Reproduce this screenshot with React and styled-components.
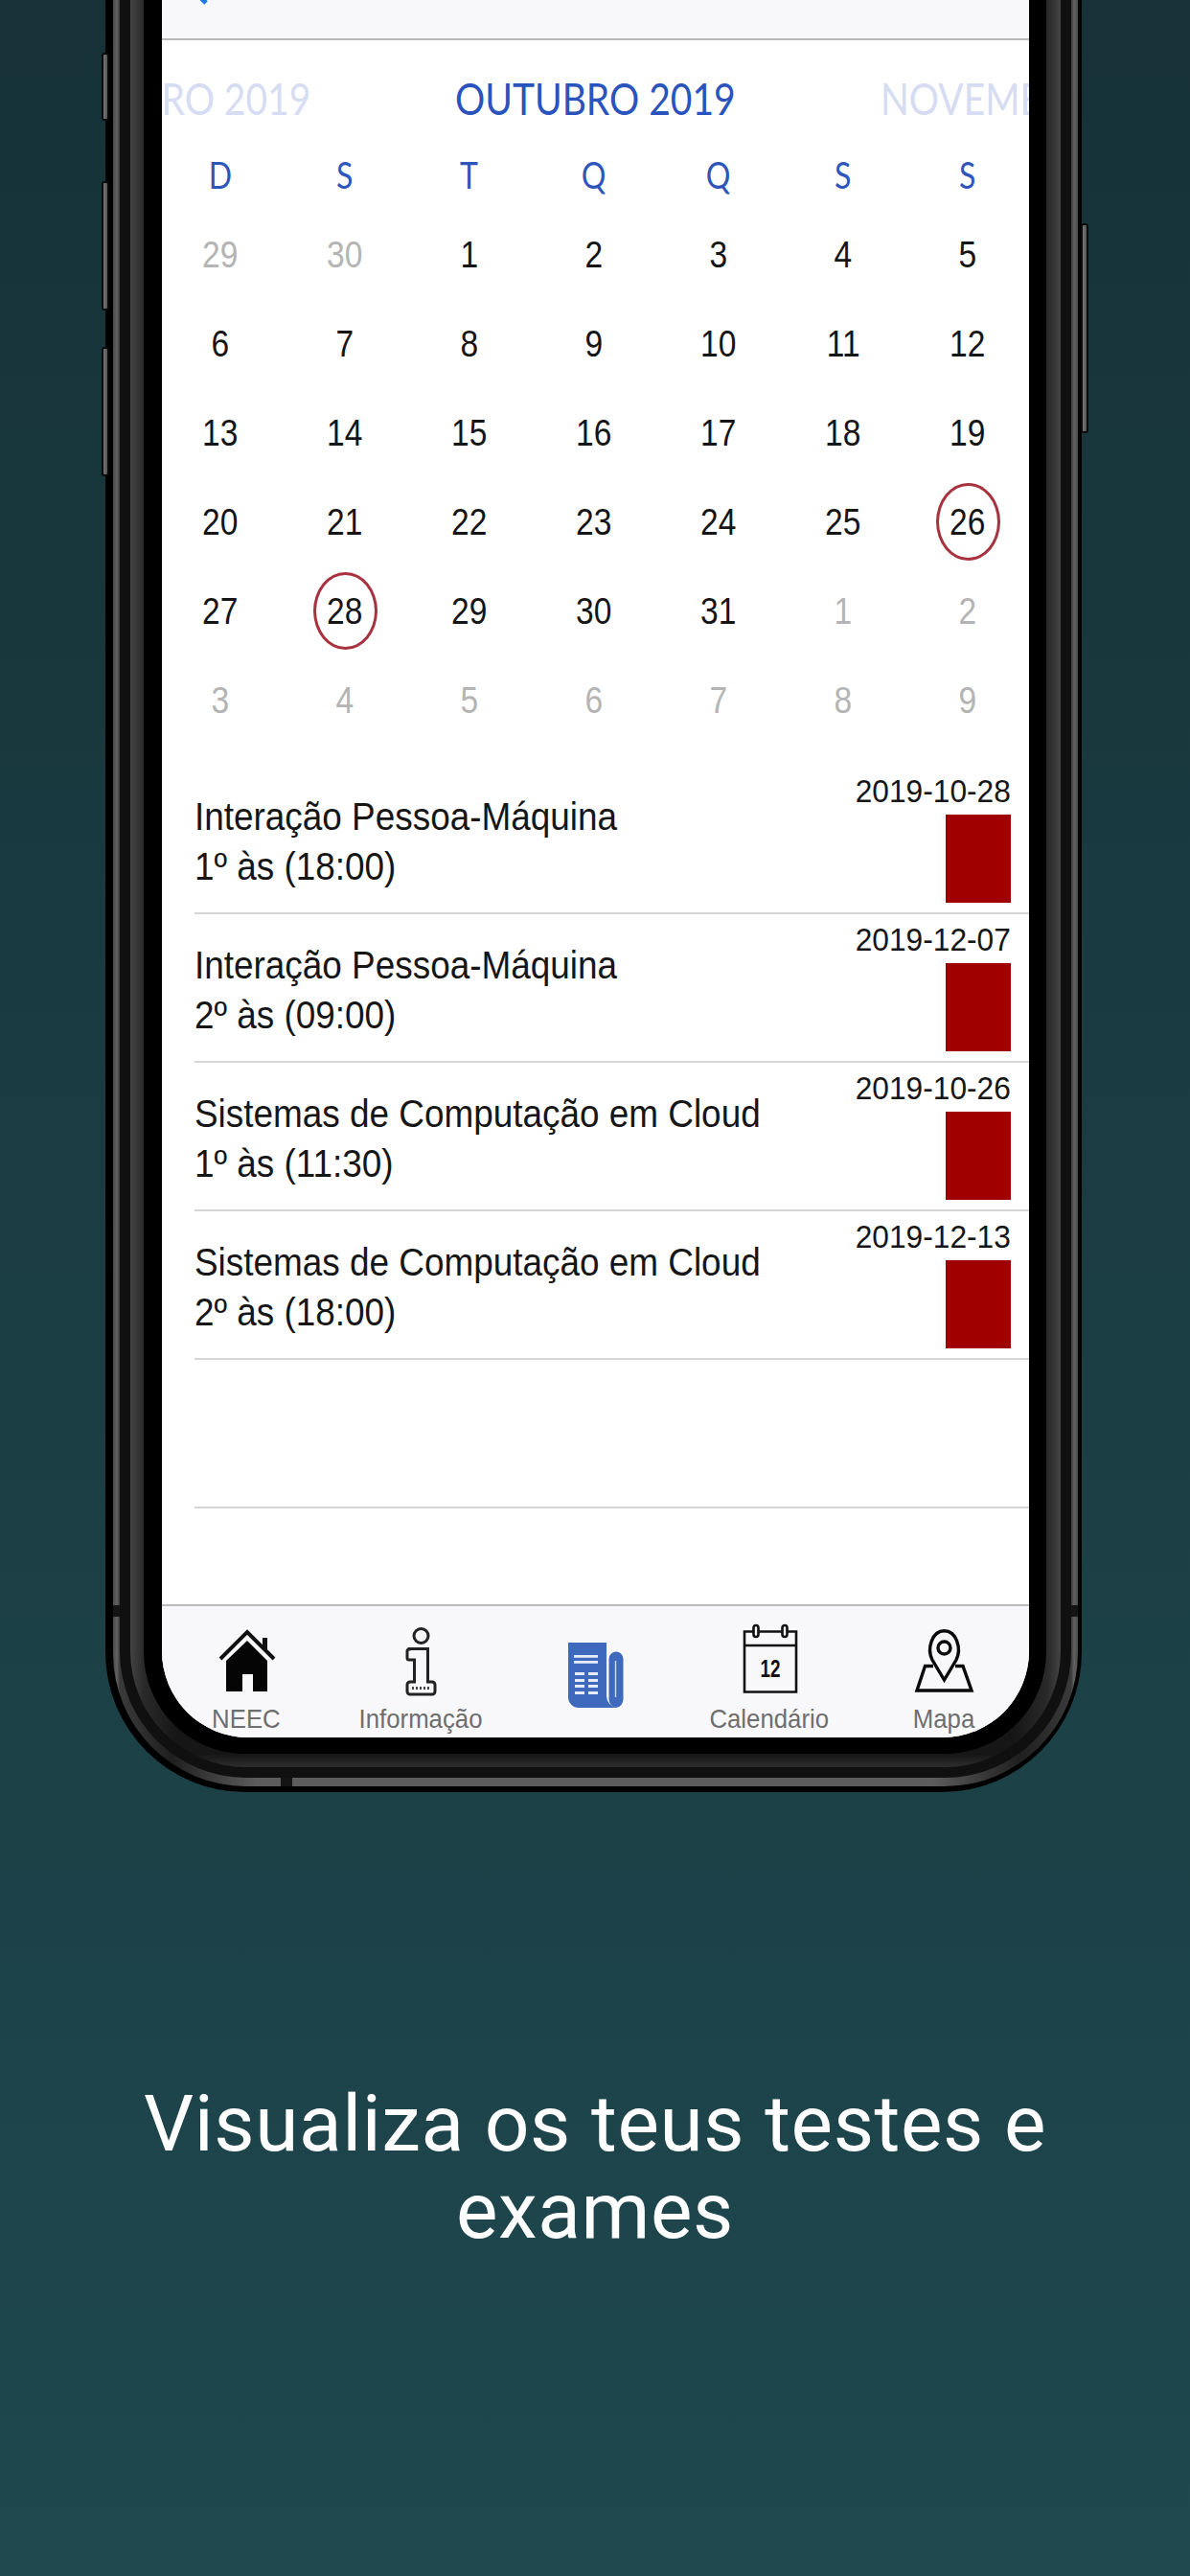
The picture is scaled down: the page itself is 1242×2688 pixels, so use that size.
import React from 'react'
import styled, { createGlobalStyle } from 'styled-components'

const GlobalStyle = createGlobalStyle`
  html, body {
    margin: 0;
    padding: 0;
    background: #1e484e;
  }
`

const WEEKDAYS = ['D', 'S', 'T', 'Q', 'Q', 'S', 'S']

const DAYS = [
  [29, true], [30, true], [1], [2], [3], [4], [5],
  [6], [7], [8], [9], [10], [11], [12],
  [13], [14], [15], [16], [17], [18], [19],
  [20], [21], [22], [23], [24], [25], [26, false, true],
  [27], [28, false, true], [29], [30], [31], [1, true], [2, true],
  [3, true], [4, true], [5, true], [6, true], [7, true], [8, true], [9, true],
]

const EXAMS = [
  { title: 'Interação Pessoa-Máquina', when: '1º às (18:00)', date: '2019-10-28' },
  { title: 'Interação Pessoa-Máquina', when: '2º às (09:00)', date: '2019-12-07' },
  { title: 'Sistemas de Computação em Cloud', when: '1º às (11:30)', date: '2019-10-26' },
  { title: 'Sistemas de Computação em Cloud', when: '2º às (18:00)', date: '2019-12-13' },
]

const HomeIcon = () => (
  <TabSvg viewBox="0 0 80 90">
    <path d="M13 38 L41 10 L69 38" fill="none" stroke="#111" strokeWidth="4" />
    <path d="M57 16 H62 V30 L57 25 Z" fill="#111" />
    <path d="M41 19 L62 40 V72 H47 V54 H36 V72 H19 V40 Z" fill="#050505" />
  </TabSvg>
)

const InfoIcon = () => (
  <TabSvg viewBox="0 0 80 90">
    <g fill="none" stroke="#222" strokeWidth="3">
      <circle cx="40.5" cy="14" r="7.5" />
      <path d="M28 27.5 H47.5 V62 H52 a3 3 0 0 1 3 3 v7 a3 3 0 0 1 -3 3 H29 a3 3 0 0 1 -3 -3 v-7 a3 3 0 0 1 3 -3 H33.5 V39 H28 a2 2 0 0 1 -2 -2 v-7 a2 2 0 0 1 2 -2 z" />
      <path d="M31 68.5 H50" strokeDasharray="2 2" stroke="#444" />
    </g>
  </TabSvg>
)

const NewsIcon = () => (
  <TabSvg viewBox="0 0 80 90">
    <path d="M12 21 H52 V76 a13 13 0 0 0 10 13 H23 a11 11 0 0 1 -11 -11 Z" fill="#3f69bd" />
    <path d="M54.5 38 a7.5 7.5 0 0 1 15 0 V80 a9 9 0 0 1 -7.5 9 a9 9 0 0 1 -7.5 -9 Z" fill="#3f69bd" />
    <path d="M61.5 40 V78" stroke="#c9d5ee" strokeWidth="1.5" />
    <g fill="#e6ecf8">
      <rect x="18" y="34" width="25" height="2.8" />
      <rect x="18" y="40" width="25" height="2.8" />
      {[52, 59, 65, 72].map((y) => (
        <React.Fragment key={y}>
          <rect x="19" y={y} width="10" height="3" />
          <rect x="33" y={y} width="10" height="3" />
        </React.Fragment>
      ))}
    </g>
  </TabSvg>
)

const CalendarIcon = () => (
  <TabSvg viewBox="0 0 80 90">
    <g fill="none" stroke="#111" strokeWidth="2.6">
      <path d="M14 9.5 H68 V72.5 H14 Z" />
      <path d="M14 24 H68" />
      <rect x="23.5" y="3" width="5" height="12" rx="2.5" fill="#f8f8fa" />
      <rect x="53.5" y="3" width="5" height="12" rx="2.5" fill="#f8f8fa" />
    </g>
    <CalendarNumber x="41" y="57" textAnchor="middle" textLength="21" lengthAdjust="spacingAndGlyphs">12</CalendarNumber>
  </TabSvg>
)

const MapIcon = () => (
  <TabSvg viewBox="0 0 80 90">
    <g fill="none" stroke="#0a0a0a" strokeWidth="3.4">
      <path d="M40.5 60 L28 39 C22 27 28 8.7 40.5 8.7 C53 8.7 59 27 53 39 Z" />
      <circle cx="40.5" cy="26.5" r="6.5" />
      <path d="M29 45.5 H20.5 L12 71 H69 L60 45.5 H52" />
    </g>
  </TabSvg>
)

const TABS = [
  { label: 'NEEC', icon: HomeIcon },
  { label: 'Informação', icon: InfoIcon },
  { label: '', icon: NewsIcon },
  { label: 'Calendário', icon: CalendarIcon },
  { label: 'Mapa', icon: MapIcon },
]

export default function App() {
  return (
    <>
      <GlobalStyle />
      <Page>
        <Phone>
          <SideButton $side="left" $top={55} $height={71} />
          <SideButton $side="left" $top={189} $height={135} />
          <SideButton $side="left" $top={362} $height={135} />
          <SideButton $side="right" $top={233} $height={219} />
          <RimStripe>
            <BandGap $edge="left" />
            <BandGap $edge="right" />
            <BandGap $edge="bottom" />
            <RimDark>
              <RimBevel>
                <Bezel>
                  <Screen>
                    <TopBar>
                      <BackChevron viewBox="0 0 24 10">
                        <path d="M2 -8 L13 3" fill="none" stroke="#1a7ae0" strokeWidth="5" />
                      </BackChevron>
                    </TopBar>
                    <MonthStrip>
                      <MonthName $faded $align="end">SETEMBRO 2019</MonthName>
                      <MonthName>OUTUBRO 2019</MonthName>
                      <MonthName $faded $align="start">NOVEMBRO 2019</MonthName>
                    </MonthStrip>
                    <WeekRow>
                      {WEEKDAYS.map((d, i) => (
                        <Weekday key={i}><span>{d}</span></Weekday>
                      ))}
                    </WeekRow>
                    <DayGrid>
                      {DAYS.map(([n, muted, marked], i) => (
                        <DayCell key={i}>
                          <DayNumber $muted={muted} $marked={marked}><span>{n}</span></DayNumber>
                        </DayCell>
                      ))}
                    </DayGrid>
                    <ExamList>
                      {EXAMS.map((exam, i) => (
                        <ExamRow key={i}>
                          <ExamText>
                            <span>{exam.title}</span>
                            <span>{exam.when}</span>
                          </ExamText>
                          <ExamSide>
                            <ExamDate>{exam.date}</ExamDate>
                            <ExamBlock />
                          </ExamSide>
                        </ExamRow>
                      ))}
                      <ExamRow />
                    </ExamList>
                    <TabBar>
                      {TABS.map(({ label, icon: Icon }, i) => (
                        <Tab key={i}>
                          <Icon />
                          <TabLabel>{label}</TabLabel>
                        </Tab>
                      ))}
                    </TabBar>
                  </Screen>
                </Bezel>
              </RimBevel>
            </RimDark>
          </RimStripe>
        </Phone>
        <Caption>Visualiza os teus testes e exames</Caption>
      </Page>
    </>
  )
}

const Page = styled.div`
  width: 1242px;
  height: 2688px;
  overflow: hidden;
  display: flex;
  flex-direction: column;
  background: linear-gradient(180deg, #163238 0%, #1e484e 100%);
`

const Phone = styled.div`
  position: relative;
  width: 1019px;
  margin-left: 110px;
  padding: 0 4px 6px 8px;
  box-sizing: border-box;
  background: #000;
  border-radius: 0 0 146px 146px;
`

const SideButton = styled.div`
  position: absolute;
  top: ${(p) => p.$top}px;
  height: ${(p) => p.$height}px;
  ${(p) => (p.$side === 'left' ? 'left: -4px;' : 'right: -7px;')}
  width: 8px;
  box-sizing: border-box;
  border: 2px solid #0c0c0c;
  border-radius: 3px;
  background: linear-gradient(90deg, #777, #555);
`

const RimStripe = styled.div`
  position: relative;
  padding: 0 7px 9px 7px;
  background: linear-gradient(
    90deg,
    #4a4a4a,
    #626262 0.4%,
    #3a3a3a 0.7%,
    #1f1f1f 6%,
    #5c5c5c 15%,
    #5c5c5c 85%,
    #1f1f1f 94%,
    #3a3a3a 99.3%,
    #626262 99.6%,
    #4a4a4a
  );
  border-radius: 0 0 139px 139px;
`

const BandGap = styled.div`
  position: absolute;
  background: #141414;
  ${(p) =>
    p.$edge === 'left'
      ? 'left: 0; top: 1675px; width: 7px; height: 12px;'
      : p.$edge === 'right'
      ? 'right: 0; top: 1675px; width: 7px; height: 12px;'
      : 'left: 175px; bottom: 0; width: 12px; height: 9px;'}
`

const RimDark = styled.div`
  position: relative;
  padding: 0 11px 11px 11px;
  background: #101010;
  border-radius: 0 0 132px 132px;
`

const RimBevel = styled.div`
  padding: 0 15px 14px 14px;
  background:
    linear-gradient(180deg, transparent calc(100% - 14px), #151515 calc(100% - 14px), #2e2e2e 100%),
    linear-gradient(90deg, #444, #2a2a2a 1.4%, #161616 5%, #161616 95%, #2a2a2a 98.6%, #444);
  border-radius: 0 0 121px 121px;
`

const Bezel = styled.div`
  padding: 0 18px 17px 19px;
  background: #000;
  border-radius: 0 0 106px 106px;
`

const Screen = styled.div`
  height: 1813px;
  display: flex;
  flex-direction: column;
  overflow: hidden;
  background: #fff;
  border-radius: 0 0 90px 90px;
  font-family: "Liberation Sans", Arial, sans-serif;
`

const TopBar = styled.div`
  height: 40px;
  flex: none;
  background: #f8f7fa;
  border-bottom: 2px solid #b9b9b9;
`

const BackChevron = styled.svg`
  display: block;
  width: 24px;
  height: 10px;
  margin-left: 33px;
`

const MonthStrip = styled.div`
  height: 120px;
  flex: none;
  display: grid;
  grid-template-columns: minmax(0, 1fr) 291px minmax(0, 1fr);
  column-gap: 152px;
  align-items: center;
  overflow: hidden;
  font-family: Lato, "Liberation Sans", sans-serif;
`

const MonthName = styled.div`
  font-size: 47px;
  line-height: 60px;
  white-space: nowrap;
  color: ${(p) => (p.$faded ? '#d6dcf2' : '#2a53bb')};
  justify-self: ${(p) => p.$align || 'center'};
  transform: scaleX(0.83);
  transform-origin: ${(p) => (p.$align === 'end' ? 'right' : p.$align === 'start' ? 'left' : 'center')};
`

const WeekRow = styled.div`
  height: 40px;
  flex: none;
  display: grid;
  grid-template-columns: repeat(7, 130px);
  margin-left: -4px;
  align-items: center;
  font-family: Lato, "Liberation Sans", sans-serif;
`

const Weekday = styled.div`
  text-align: center;
  font-size: 39px;
  line-height: 40px;
  color: #2e55b9;

  span {
    display: inline-block;
    transform: scaleX(0.82);
  }
`

const DayGrid = styled.div`
  flex: none;
  display: grid;
  grid-template-columns: repeat(7, 130px);
  grid-auto-rows: 93px;
  margin: 17px 0 22px -4px;
`

const DayCell = styled.div`
  display: flex;
  align-items: center;
  justify-content: center;
`

const DayNumber = styled.div`
  width: 67px;
  height: 81px;
  box-sizing: border-box;
  display: flex;
  align-items: center;
  justify-content: center;
  font-size: 39px;
  color: ${(p) => (p.$muted ? '#b4b4b4' : '#151515')};
  border: ${(p) => (p.$marked ? '3px solid #a83340' : 'none')};
  border-radius: 50%;

  span {
    display: inline-block;
    transform: scaleX(0.86);
  }
`

const ExamList = styled.div`
  flex: 1;
`

const ExamRow = styled.div`
  height: 155px;
  box-sizing: border-box;
  margin-left: 34px;
  display: flex;
  justify-content: space-between;
  border-bottom: 2px solid #d6d6d6;
`

const ExamText = styled.div`
  padding-top: 27px;
  display: flex;
  flex-direction: column;
  font-size: 41px;
  line-height: 52px;
  color: #161616;

  span {
    display: block;
    white-space: nowrap;
    transform: scaleX(0.9);
    transform-origin: left;
  }
`

const ExamSide = styled.div`
  padding: 8px 19px 0 0;
  display: flex;
  flex-direction: column;
  align-items: flex-end;
`

const ExamDate = styled.div`
  font-size: 33px;
  line-height: 38px;
  color: #161616;
  transform: scaleX(0.96);
  transform-origin: right;
`

const ExamBlock = styled.div`
  width: 68px;
  height: 92px;
  margin-top: 5px;
  background: #a00000;
`

const TabBar = styled.div`
  height: 139px;
  flex: none;
  box-sizing: border-box;
  display: grid;
  grid-template-columns: repeat(5, 182px);
  margin-left: -3px;
  padding-top: 17px;
  background: #f8f8fa;
  border-top: 2px solid #bcbcbc;
`

const Tab = styled.div`
  display: flex;
  flex-direction: column;
  align-items: center;
`

const TabSvg = styled.svg`
  display: block;
  width: 80px;
  height: 90px;
  flex: none;
`

const CalendarNumber = styled.text`
  font-family: "Liberation Sans", Arial, sans-serif;
  font-size: 25px;
  font-weight: 700;
  fill: #111;
`

const TabLabel = styled.div`
  font-size: 28px;
  line-height: 22px;
  white-space: nowrap;
  color: #6e6e6e;
  transform: scaleX(0.92);
`

const Caption = styled.div`
  width: 1000px;
  margin: 301px auto 0;
  text-align: center;
  font-family: Roboto, "Liberation Sans", sans-serif;
  font-size: 82px;
  line-height: 91px;
  letter-spacing: 0.6px;
  color: #fff;
`
